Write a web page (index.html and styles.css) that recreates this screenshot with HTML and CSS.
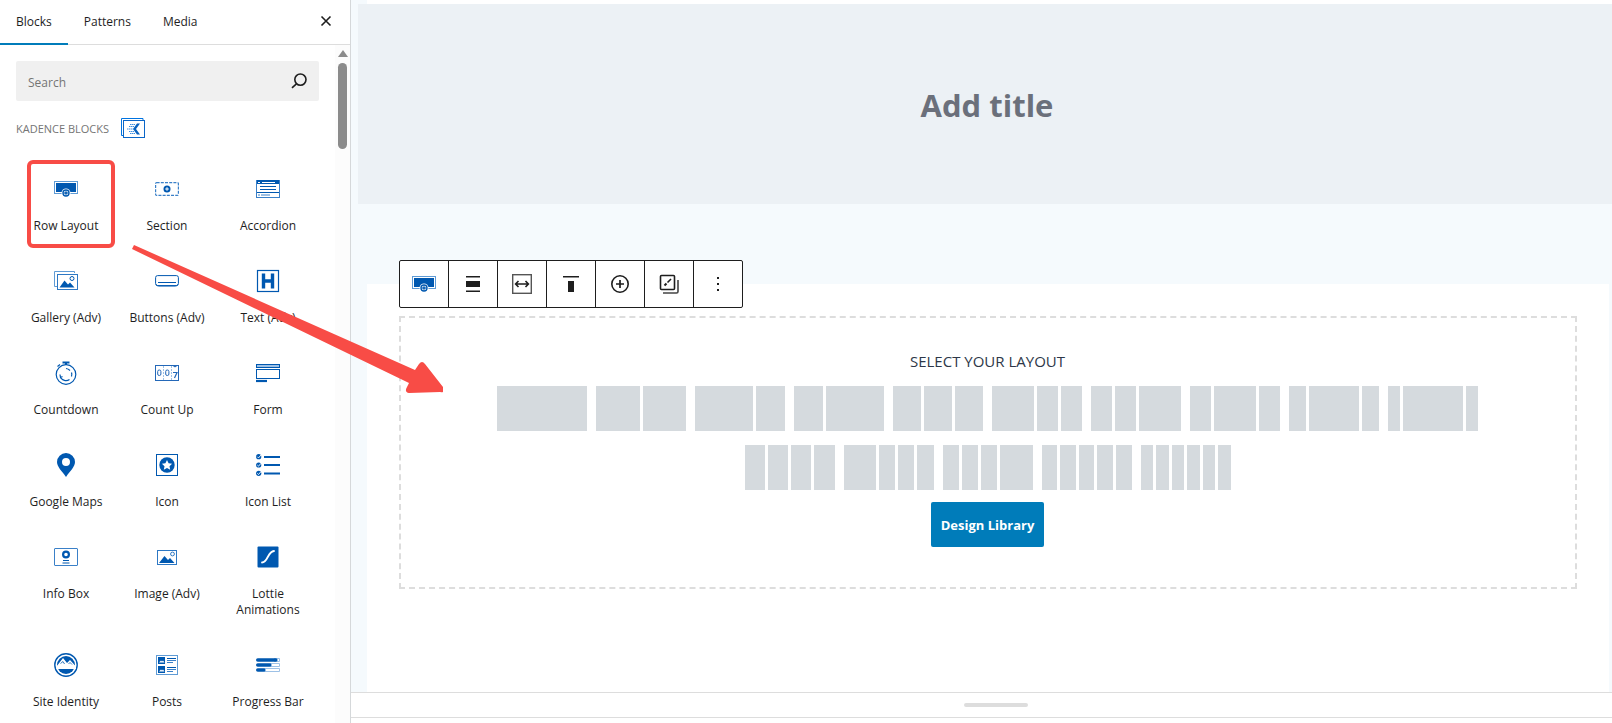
FILE: index.html
```
<!DOCTYPE html>
<html lang="en">
<head>
  <meta charset="UTF-8">
  <meta name="viewport" content="width=device-width, initial-scale=1.0">
  <title>Edit Page</title>
  <link rel="stylesheet" href="styles.css">
</head>
<body>

  <svg width="0" height="0" class="defs">
    <symbol id="row-layout" viewBox="0 0 24 24">
      <rect x="0.5" y="4.5" width="23" height="12" fill="#fff" stroke="#5f9bd5"/>
      <rect x="2" y="6" width="20" height="9" fill="#0058b0"/>
      <circle cx="12" cy="16" r="4.500" fill="#fff"/>
      <circle cx="12" cy="16" r="3" fill="#fff" stroke="#0058b0" stroke-width="1.400"/>
      <path d="M12 14.200v3.600M10.200 16h3.600" stroke="#0058b0" stroke-width="1.300"/>
    </symbol>
  </svg>

  <div class="editor">
    <aside class="inserter">
      <div class="tabs">
        <button class="tab active">Blocks</button>
        <button class="tab">Patterns</button>
        <button class="tab">Media</button>
        <button class="close" aria-label="Close">
          <svg viewBox="0 0 24 24"><path d="M7.500 7.500l9 9M16.500 7.500l-9 9" stroke="#1e1e1e" stroke-width="1.600"/></svg>
        </button>
      </div>
      <div class="inserter-body">
        <div class="panel">
          <div class="search">
            <input type="text" placeholder="Search" aria-label="Search">
            <svg viewBox="0 0 24 24" fill="none" stroke="#1e1e1e" stroke-width="1.600"><circle cx="13.400" cy="10.600" r="5.600"/><path d="M9.400 14.800L5 18.800"/></svg>
          </div>
          <h2 class="category">Kadence Blocks
            <svg viewBox="0 0 24 20" fill="none">
              <path d="M22 2.500V.5H.5v17h2" stroke="#0073e0"/>
              <rect x="2.500" y="2.500" width="21" height="17" fill="#fff" stroke="#0a66c8"/>
              <path d="M19 5.500l-4 5.500 4 5.500h-3l-4-5.500 4-5.500z" fill="#0a62be"/>
              <path d="M9 6.500h5M8 8.500h5M6 11h7M8 13.500h5M9 15.500h5" stroke="#3c8ee0" stroke-dasharray="1.500 .5"/>
            </svg>
          </h2>
          <div class="blocks">
            <button class="block selected">
              <svg viewBox="0 0 24 24"><use href="#row-layout"/></svg>
              <span>Row Layout</span>
            </button>
            <button class="block">
              <svg viewBox="0 0 24 24" fill="none"><rect x=".6" y="5.600" width="22.800" height="12.800" rx="1" stroke="#3a80c8" stroke-width="1.200" stroke-dasharray="3 1.200"/><circle cx="12" cy="12" r="3.500" fill="#0058b0"/><path d="M12 10.200v3.600M10.200 12h3.600" stroke="#fff"/></svg>
              <span>Section</span>
            </button>
            <button class="block">
              <svg viewBox="0 0 24 24" fill="none"><rect x=".5" y="3.500" width="23" height="17" stroke="#3a80c8"/><path d="M1 3h22v4H1z" fill="#0058b0"/><path d="M2 5.500h2M6 5.500h13" stroke="#fff"/><path d="M4 9.500h16M4 12.500h16M1 15.500h22" stroke="#0058b0"/><path d="M2 18h2M5 18h9" stroke="#3a80c8"/></svg>
              <span>Accordion</span>
            </button>
            <button class="block">
              <svg viewBox="0 0 24 24" fill="none"><path d="M20.500 4V2.500H.5v15H3" stroke="#5f9bd5"/><rect x="3.500" y="5.500" width="20" height="15" fill="#fff" stroke="#2d78c4"/><path d="M5.500 18.500l5-7 3.500 4 2-2 4.500 5z" fill="#0058b0"/><circle cx="18" cy="9.500" r="2" stroke="#0058b0"/></svg>
              <span>Gallery (Adv)</span>
            </button>
            <button class="block">
              <svg viewBox="0 0 24 24" fill="none" stroke="#0058b0"><rect x=".6" y="6.600" width="22.800" height="10" rx="2"/><path d="M1 15.500q1 1.500 3 1.500h16q2 0 3-1.500M3 13.500h18"/></svg>
              <span>Buttons (Adv)</span>
            </button>
            <button class="block">
              <svg viewBox="0 0 24 24" fill="none"><rect x="1.500" y="1.500" width="21" height="21" stroke="#0058b0" stroke-width="1.200"/><path d="M7.500 4.500v15M16.500 4.500v15M7 12h10" stroke="#0058b0" stroke-width="3.400"/></svg>
              <span>Text (Adv)</span>
            </button>
            <button class="block">
              <svg viewBox="0 0 24 24" fill="none" stroke="#0058b0" stroke-width="1.200"><circle cx="12" cy="13.500" r="9.800"/><path d="M8.500 1.500h7M12 1.500V4" stroke-width="2"/><path d="M3.500 5.500l2.500-2M12 7.500a6 6 0 0 1 4 2M17.500 11.500a6 6 0 0 1 0 4M6.500 16a6 6 0 0 0 9 2.500M6 13.500l.5 3 2-1"/></svg>
              <span>Countdown</span>
            </button>
            <button class="block">
              <svg viewBox="0 0 24 24" fill="none" stroke="#2468b8"><rect x=".5" y="4.500" width="23" height="15"/><path d="M8.500 5v14M16.500 5v14" stroke="#9dc1e6" stroke-dasharray="2 1"/><rect x="2.700" y="9" width="3.200" height="5.500" rx="1.500"/><rect x="10.700" y="9" width="3.200" height="5.500" rx="1.500"/><path d="M18 11.500h4l-2.500 5.500M18.500 4.500q1.500 2.500 3 0" stroke-width="1.200"/></svg>
              <span>Count Up</span>
            </button>
            <button class="block">
              <svg viewBox="0 0 24 24" fill="none" stroke="#0058b0"><rect x=".5" y="3.500" width="23" height="3" fill="#9dc1e6"/><rect x=".5" y="8.500" width="23" height="9"/><path d="M0 20h11" stroke-width="2.200"/></svg>
              <span>Form</span>
            </button>
            <button class="block">
              <svg viewBox="0 0 24 24"><path d="M12 0a9 9 0 0 0-9 9c0 5 5 9 9 15 4-6 9-10 9-15a9 9 0 0 0-9-9zm0 5a4 4 0 1 1 0 8 4 4 0 0 1 0-8z" fill="#0058b0"/></svg>
              <span>Google Maps</span>
            </button>
            <button class="block">
              <svg viewBox="0 0 24 24" fill="none"><rect x="1.500" y="1.500" width="21" height="21" stroke="#0058b0"/><circle cx="12" cy="12" r="7.700" fill="#0058b0"/><path d="M12 7l1.600 3.200 3.500.5-2.600 2.500.7 3.600-3.200-1.700-3.200 1.700.7-3.600-2.600-2.500 3.500-.5z" fill="#fff"/></svg>
              <span>Icon</span>
            </button>
            <button class="block">
              <svg viewBox="0 0 24 24" fill="none"><path d="M8 4h16M8 12h16M8 20.500h16" stroke="#0058b0" stroke-width="2"/><g fill="#0058b0"><circle cx="2.700" cy="3.700" r="2.600"/><circle cx="2.700" cy="12" r="2.600"/><circle cx="2.700" cy="20.300" r="2.600"/></g><path d="M1.300 3.700l1.200 1.200L5 2M1.300 12l1.200 1.200L5 10.300M1.300 20.300l1.200 1.200L5 18.600" stroke="#fff" stroke-width=".9"/></svg>
              <span>Icon List</span>
            </button>
            <button class="block">
              <svg viewBox="0 0 24 24" fill="none" stroke="#0058b0"><rect x=".5" y="3.500" width="23" height="17" rx=".5" stroke="#3a80c8"/><circle cx="12" cy="9.500" r="2.900" stroke-width="2.200"/><path d="M9 15.500h6M8.500 18h7" stroke-width="1.200"/></svg>
              <span>Info Box</span>
            </button>
            <button class="block">
              <svg viewBox="0 0 24 24" fill="none"><rect x="2.500" y="5.500" width="19" height="14" stroke="#2d78c4"/><path d="M4 18l5.500-7 3.500 4 2-2 4.500 5z" fill="#0058b0"/><circle cx="17.500" cy="9" r="1.900" stroke="#2d78c4"/></svg>
              <span>Image (Adv)</span>
            </button>
            <button class="block">
              <svg viewBox="0 0 24 24" fill="none"><rect x="1.500" y="1.500" width="21" height="21" rx="1" fill="#0058b0"/><path d="M6 17.500c6 0 5.500-11 12-11.500" stroke="#fff" stroke-width="1.800" stroke-linecap="round"/></svg>
              <span>Lottie Animations</span>
            </button>
            <button class="block">
              <svg viewBox="0 0 24 24" fill="none"><circle cx="12" cy="12" r="11.200" stroke="#0058b0" stroke-width="1.400"/><circle cx="12" cy="12" r="9" fill="#0058b0"/><path d="M2.500 13.500L9 5l4 5 3-3 6 6.500V16H2.500z" fill="#fff"/><path d="M6.500 10.500L9 8.500l1.500 2.500M14.500 11l1.500-1.500 2 2" stroke="#0058b0" stroke-width=".8"/></svg>
              <span>Site Identity</span>
            </button>
            <button class="block">
              <svg viewBox="0 0 24 24" fill="none"><rect x="1.500" y="2.500" width="21" height="19" stroke="#5f9bd5"/><path d="M3 4h7v7H3zM3 13h7v7H3z" fill="#0058b0"/><path d="M4 9.500l2-2 1 1 1-1 1.500 2zM4 18.500l2-2 1 1 1-1 1.500 2z" fill="#fff"/><path d="M12 5.500h9M12 14.500h9" stroke="#0058b0"/><path d="M12 7.500h9M12 9.500h6M12 16.500h9M12 18.500h6" stroke="#3a80c8"/></svg>
              <span>Posts</span>
            </button>
            <button class="block">
              <svg viewBox="0 0 24 24" fill="none"><path d="M18 5.500h5.500v3H18M14 10.500h9.500v3H14M8 15.500h15.500v3H8" stroke="#9dc1e6"/><path d="M1.800 7h18M1.800 12h12M1.800 17h6" stroke="#0058b0" stroke-width="3.600" stroke-linecap="round"/></svg>
              <span>Progress Bar</span>
            </button>
          </div>
        </div>
        <div class="scrollbar">
          <span class="up"></span>
          <span class="thumb"></span>
        </div>
      </div>
    </aside>

    <main class="canvas">
      <div class="page">
        <h1 class="page-title">Add title</h1>
        <div class="content">
          <div class="toolbar">
            <button aria-label="Row Layout"><svg viewBox="0 0 24 24"><use href="#row-layout"/></svg></button>
            <button aria-label="Align"><svg viewBox="0 0 24 24" fill="#1e1e1e"><path d="M5 4h14v1.500H5zM5 9h14v6H5zM5 18.500h14V20H5z"/></svg></button>
            <button aria-label="Width"><svg viewBox="0 0 24 24" fill="none" stroke="#1e1e1e"><rect x="2.700" y="2.700" width="18.600" height="18.600" stroke="#555" stroke-width="1.400"/><path d="M6 12h12M8.500 9L5.600 12l2.900 3M15.500 9l2.900 3-2.900 3" stroke-width="1.600"/></svg></button>
            <button aria-label="Vertical align"><svg viewBox="0 0 24 24" fill="#1e1e1e"><path d="M4 4h16v1.500H4zM9 9h6v11H9z"/></svg></button>
            <button aria-label="Add section"><svg viewBox="0 0 24 24" fill="none" stroke="#1e1e1e"><circle cx="12" cy="12" r="8.200" stroke-width="1.600"/><path d="M12 8v8M8 12h8" stroke-width="1.700"/></svg></button>
            <button aria-label="Copy styles"><svg viewBox="0 0 24 24" fill="none" stroke="#1e1e1e" stroke-width="1.600"><rect x="3.500" y="3.500" width="14" height="14" rx="1"/><path d="M6 21h13.500q1.500 0 1.500-1.500V8" stroke="#444"/><path d="M7.500 13.500l2-2" stroke-width="2"/><path d="M10.500 10.500L14 7"/></svg></button>
            <button aria-label="Options"><svg viewBox="0 0 24 24" fill="#1e1e1e"><path d="M11 5h2v2h-2zM11 11h2v2h-2zM11 17h2v2h-2z"/></svg></button>
          </div>
          <section class="layout-picker">
            <p class="picker-label">SELECT YOUR LAYOUT</p>
            <div class="layouts" id="layouts"></div>
            <button class="library">Design Library</button>
          </section>
        </div>
      </div>
      <div class="metaboxes"><span class="handle"></span></div>
    </main>
  </div>

  <svg class="arrow" viewBox="0 0 312 148"><path d="M3 0L284 125l4-6q3-4 6 0l18 23q3 6-3 5l-31 1q-5-1-2-6l2-4L1 4z" fill="#f84c46"/></svg>

  <script>
    // column proportions of every row layout
    const layouts = [
      [1],
      [1, 1],
      [2, 1],
      [1, 2],
      [1, 1, 1],
      [2, 1, 1],
      [1, 1, 2],
      [1, 2, 1],
      [1, 3, 1],
      [1, 5, 1],
      [1, 1, 1, 1],
      [2, 1, 1, 1],
      [1, 1, 1, 2],
      [1, 1, 1, 1, 1],
      [1, 1, 1, 1, 1, 1]
    ];

    const list = document.getElementById('layouts');
    layouts.forEach(cols => {
      const button = document.createElement('button');
      button.className = 'layout';
      button.setAttribute('aria-label', cols.length + ' columns ' + cols.join('-'));
      button.style.gridTemplateColumns = cols.map(c => c + 'fr').join(' ');
      cols.forEach(() => button.appendChild(document.createElement('span')));
      list.appendChild(button);
    });
  </script>

</body>
</html>
```
FILE: styles.css
```
* {
  box-sizing: border-box;
}
body {
  margin: 0;
  font-family: "Open Sans", "Noto Sans", sans-serif;
  font-size: 12px;
  color: #1e1e1e;
  background: #fff;
  overflow: hidden;
}
button {
  font: inherit;
  color: inherit;
  background: none;
  border: 0;
  padding: 0;
  cursor: pointer;
}
svg {
  display: block;
  flex: none;
}
.defs {
  position: absolute;
}
.editor {
  display: flex;
  height: 100vh;
}

/* inserter */
.inserter {
  width: 351px;
  flex: none;
  display: flex;
  flex-direction: column;
  border-right: 1px solid #d5d8da;
}
.tabs {
  display: flex;
  height: 45px;
  border-bottom: 1px solid #ddd;
}
.tab {
  height: 45px;
  padding: 0 16px;
  border-bottom: 2px solid transparent;
}
.tab.active {
  border-bottom-color: #007cba;
}
.close {
  margin-left: auto;
  padding: 0 12px 3px;
}
.close svg {
  width: 24px;
  height: 24px;
}
.inserter-body {
  display: flex;
  flex: 1;
  min-height: 0;
}
.panel {
  flex: 1;
  padding: 16px;
  overflow: hidden;
}
.search {
  display: flex;
  align-items: center;
  height: 40px;
  padding: 0 8px 0 12px;
  background: #f0f0f0;
  border-radius: 2px;
}
.search input {
  flex: 1;
  min-width: 0;
  padding: 2px 0 0;
  border: 0;
  outline: 0;
  background: none;
  font: inherit;
}
.search input::placeholder {
  color: #757575;
}
.search svg {
  width: 24px;
  height: 24px;
}
.category {
  display: flex;
  align-items: center;
  gap: 12px;
  height: 24px;
  margin: 15px 0 17px;
  font-size: 11px;
  font-weight: 500;
  text-transform: uppercase;
  color: #757575;
}
.category svg {
  width: 24px;
  height: 20px;
}
.blocks {
  display: grid;
  grid-template-columns: repeat(3, 1fr);
}
.block {
  display: flex;
  flex-direction: column;
  align-items: center;
  gap: 17px;
  padding: 20px 9px 15px 8px;
  line-height: 16px;
  position: relative;
}
.block svg {
  width: 24px;
  height: 24px;
}
.selected::after {
  content: "";
  position: absolute;
  inset: 3px 2px 1px 11px;
  border: 4px solid #f84c46;
  border-radius: 6px;
}
.scrollbar {
  width: 15px;
  background: #fcfcfc;
  display: flex;
  flex-direction: column;
  align-items: center;
  gap: 6px;
  padding-top: 5px;
}
.up {
  border: 5px solid transparent;
  border-top: 0;
  border-bottom: 7px solid #8b8b8b;
}
.thumb {
  width: 9px;
  height: 86px;
  border-radius: 5px;
  background: #8b8b8b;
}

/* editor canvas */
.canvas {
  flex: 1;
  min-width: 0;
  display: flex;
  flex-direction: column;
}
.page {
  flex: 1;
  min-height: 0;
  display: flex;
  flex-direction: column;
  padding-left: 7px;
  background: #f5fafd;
}
.page::before {
  content: "";
  height: 4px;
  margin-left: 9px;
  background: #fff;
}
.page-title {
  margin: 0 0 56px;
  padding: 78px 0 76px 4px;
  line-height: 46px;
  font-size: 31px;
  font-weight: 700;
  text-align: center;
  color: #6b707b;
  background: #ecf1f5;
}
.content {
  flex: 1;
  margin: 24px 3px 0 9px;
  padding: 0 32px;
  background: #fff;
}
.toolbar {
  display: flex;
  width: max-content;
  margin-top: -24px;
  margin-bottom: 8px;
  border: 1px solid #1e1e1e;
  border-radius: 2px;
  background: #fff;
}
.toolbar button {
  box-sizing: content-box;
  width: 48px;
  height: 46px;
  display: grid;
  place-items: center;
}
.toolbar button + button {
  border-left: 1px solid #1e1e1e;
}
.toolbar svg {
  width: 24px;
  height: 24px;
}
.layout-picker {
  display: flex;
  flex-direction: column;
  align-items: center;
  padding: 32px 49px 40px 48px;
  border: 2px dashed #ddd;
}
.picker-label {
  margin: 0 0 13px;
  font-size: 15px;
  line-height: 23px;
  color: #2d3748;
}
.layouts {
  display: flex;
  flex-wrap: wrap;
  justify-content: center;
  gap: 14px 9px;
  max-width: 1001px;
}
.layout {
  display: grid;
  gap: 3px;
  width: 90px;
  height: 45px;
}
.layout span {
  background: #d5dade;
}
.library {
  margin-top: 12px;
  height: 45px;
  padding: 0 10px;
  border-radius: 2px;
  background: #007cba;
  color: #fff;
  font-size: 13px;
  font-weight: 700;
}
.metaboxes {
  height: 31px;
  border-top: 1px solid #ddd;
}
.metaboxes::after {
  content: "";
  display: block;
  margin-top: 10px;
  border-top: 1px solid #ddd;
}
.handle {
  display: block;
  width: 64px;
  height: 4px;
  margin: 10px 0 0 calc(50% - 18px);
  border-radius: 2px;
  background: #ddd;
}

/* pointer from the block to the canvas */
.arrow {
  position: absolute;
  left: 131px;
  top: 245px;
  width: 312px;
  height: 148px;
  pointer-events: none;
}
```
